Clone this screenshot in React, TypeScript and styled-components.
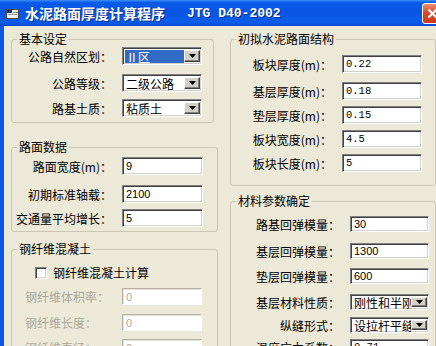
import React from "react"
import styled, { createGlobalStyle } from "styled-components"

const cjk = `"Noto Sans CJK SC", "Noto Sans", sans-serif`

const GlobalStyle = createGlobalStyle`
  html, body {
    margin: 0;
    padding: 0;
    overflow: hidden;
    background: #ece9d8;
  }
  body {
    font-family: ${cjk};
    font-size: 12px;
    color: #000;
  }
`

const Window = styled.div`
  display: flex;
  flex-direction: column;
  height: 346px;
  overflow: hidden;
  width: 448px;
`

const TitleBar = styled.div`
  align-items: center;
  background: linear-gradient(
    to bottom,
    #3d8ff7 0%,
    #0a5ae8 10%,
    #0855e4 45%,
    #0a5de9 85%,
    #0650dc 95%,
    #0842c9 100%
  );
  display: flex;
  flex: 0 0 26px;
  padding-left: 6px;
`

const TitleText = styled.span`
  color: #fff;
  font-family: ${cjk};
  font-size: 14px;
  font-weight: bold;
  margin-left: 6px;
  text-shadow: 1px 1px 0 #0b2d8c;
`

const TitleCode = styled.span`
  color: #fff;
  font-family: "Liberation Mono", monospace;
  font-size: 13px;
  font-weight: bold;
  margin-left: 22px;
  text-shadow: 1px 1px 0 #0b2d8c;
`

const CloseButton = styled.div`
  align-items: center;
  background: linear-gradient(to bottom, #ec8d73 0%, #dc4b2d 45%, #c93a1c 100%);
  border: 1px solid #fff;
  border-radius: 3px;
  display: flex;
  height: 19px;
  justify-content: center;
  margin-left: auto;
  margin-right: 5px;
  width: 19px;
`

const Client = styled.div`
  align-items: flex-start;
  background: #ece9d8;
  border-left: 4px solid #0a56e4;
  display: flex;
  flex: 1 1 auto;
  gap: 12px;
  padding: 6px 0 0 7px;
`

const Column = styled.div`
  display: flex;
  flex: none;
  flex-direction: column;
`

const Group = styled.fieldset<{ $width: number; $top: number; $bottom: number }>`
  border: 1px solid #c9c6b4;
  border-radius: 3px;
  box-sizing: border-box;
  margin: ${({ $top }) => $top}px 0 0;
  min-width: 0;
  padding: 0 0 ${({ $bottom }) => $bottom}px 0;
  width: ${({ $width }) => $width}px;
`

const Legend = styled.legend`
  font-family: ${cjk};
  font-size: 12px;
  line-height: 14px;
  margin-left: 5px;
  padding: 0 2px;
`

const Row = styled.div<{ $top: number; $height: number }>`
  align-items: center;
  display: flex;
  height: ${({ $height }) => $height}px;
  margin-top: ${({ $top }) => $top}px;
`

const Label = styled.label<{ $width: number; $left?: boolean; $disabled?: boolean }>`
  box-sizing: border-box;
  color: ${({ $disabled }) => ($disabled ? "#aca899" : "#000")};
  flex: none;
  font-family: ${cjk};
  font-size: 12px;
  margin-right: 10px;
  padding-left: ${({ $left }) => ($left ? 13 : 0)}px;
  text-align: ${({ $left }) => ($left ? "left" : "right")};
  white-space: nowrap;
  width: ${({ $width }) => $width}px;
`

const sunken = `
  border-style: solid;
  border-width: 1px;
  border-color: #808080 #fff #fff #808080;
  box-shadow: inset 1px 1px 0 #404040, inset -1px -1px 0 #d4d0c8;
`

const TextBox = styled.input<{ $width: number; $mono?: boolean; $disabled?: boolean }>`
  ${sunken}
  background: #fff;
  box-sizing: border-box;
  color: ${({ $disabled }) => ($disabled ? "#aca899" : "#000")};
  flex: none;
  font-family: ${({ $mono }) =>
    $mono ? `"Liberation Mono", monospace` : `"Liberation Sans", Arial, sans-serif`};
  font-size: ${({ $mono }) => ($mono ? 10.5 : 11)}px;
  height: 100%;
  margin: 0;
  outline: none;
  padding: 0 0 0 3px;
  width: ${({ $width }) => $width}px;

  ${({ $disabled }) =>
    $disabled &&
    `
    border-color: #b5b2a4 #fff #fff #b5b2a4;
    box-shadow: inset 1px 1px 0 #e4e1d4;
  `}
`

const Combo = styled.div<{ $width: number }>`
  ${sunken}
  align-items: center;
  background: #fff;
  box-sizing: border-box;
  display: flex;
  flex: none;
  height: 100%;
  padding: 0 1px 0 2px;
  width: ${({ $width }) => $width}px;
`

const ComboText = styled.span<{ $selected?: boolean }>`
  background: ${({ $selected }) =>
    $selected ? "linear-gradient(#316ac5, #316ac5) center / 100% 13px no-repeat" : "none"};
  color: ${({ $selected }) => ($selected ? "#fff" : "#000")};
  flex: 1 1 0;
  font-family: ${cjk};
  font-size: 12px;
  line-height: normal;
  min-width: 0;
  overflow-x: clip;
  padding-left: 1px;
  white-space: nowrap;
`

const ComboButton = styled.span`
  align-items: center;
  align-self: stretch;
  background: #d4d0c8;
  border-color: #fff #404040 #404040 #fff;
  border-style: solid;
  border-width: 1px;
  box-shadow: inset -1px -1px 0 #808080;
  box-sizing: border-box;
  display: flex;
  flex: 0 0 16px;
  justify-content: center;
  margin: 2px 0 2px;
`

const CheckBox = styled.span`
  ${sunken}
  background: #fff;
  box-sizing: border-box;
  flex: none;
  height: 12px;
  margin-left: 23px;
  margin-right: 6px;
  width: 12px;
`

const CheckLabel = styled.span`
  font-family: ${cjk};
  font-size: 12px;
`

const Arrow = () => (
  <svg width="7" height="4" viewBox="0 0 7 4">
    <polygon points="0,0 7,0 3.5,4" fill="#000" />
  </svg>
)

const AppIcon = () => (
  <svg width="13" height="11" viewBox="0 0 13 11">
    <rect x="0.5" y="1.5" width="12" height="9" fill="#f2f2f2" stroke="#4a4a4a" />
    <rect x="1" y="2" width="5" height="3" fill="#1d2f6b" />
    <rect x="7" y="4" width="5" height="1" fill="#8a8a8a" />
    <rect x="2" y="6" width="9" height="1" fill="#9a9a9a" />
  </svg>
)

const CloseIcon = () => (
  <svg width="11" height="11" viewBox="0 0 11 11">
    <path d="M1.5 1.5 L9.5 9.5 M9.5 1.5 L1.5 9.5" stroke="#fff" strokeWidth="2.2" />
  </svg>
)

type Field =
  | { kind: "text"; value: string; mono?: boolean; disabled?: boolean }
  | { kind: "combo"; value: string; selected?: boolean }

type RowSpec = { label: string; top: number; field: Field }

const basicRows: RowSpec[] = [
  { label: "公路自然区划：", top: 1, field: { kind: "combo", value: "Ⅱ区", selected: true } },
  { label: "公路等级：", top: 9, field: { kind: "combo", value: "二级公路" } },
  { label: "路基土质：", top: 7, field: { kind: "combo", value: "粘质土" } },
]

const roadRows: RowSpec[] = [
  { label: "路面宽度(m)：", top: 3, field: { kind: "text", value: "9" } },
  { label: "初期标准轴载：", top: 10, field: { kind: "text", value: "2100" } },
  { label: "交通量平均增长：", top: 6, field: { kind: "text", value: "5" } },
]

const fiberRows: RowSpec[] = [
  { label: "钢纤维体积率：", top: 9, field: { kind: "text", value: "0", disabled: true } },
  { label: "钢纤维长度：", top: 9, field: { kind: "text", value: "0", disabled: true } },
  { label: "钢纤维直径：", top: 8, field: { kind: "text", value: "0", disabled: true } },
]

const structureRows: RowSpec[] = [
  { label: "板块厚度(m)：", top: 9, field: { kind: "text", value: "0.22", mono: true } },
  { label: "基层厚度(m)：", top: 9, field: { kind: "text", value: "0.18", mono: true } },
  { label: "垫层厚度(m)：", top: 6, field: { kind: "text", value: "0.15", mono: true } },
  { label: "板块宽度(m)：", top: 6, field: { kind: "text", value: "4.5", mono: true } },
  { label: "板块长度(m)：", top: 6, field: { kind: "text", value: "5", mono: true } },
]

const materialRows: RowSpec[] = [
  { label: "路基回弹模量：", top: 8, field: { kind: "text", value: "30" } },
  { label: "基层回弹模量：", top: 11, field: { kind: "text", value: "1300" } },
  { label: "垫层回弹模量：", top: 9, field: { kind: "text", value: "600" } },
  { label: "基层材料性质：", top: 10, field: { kind: "combo", value: "刚性和半刚性" } },
  { label: "纵缝形式：", top: 7, field: { kind: "combo", value: "设拉杆平缝" } },
  { label: "温度应力系数：", top: 6, field: { kind: "text", value: "0.71", mono: true } },
]

type FormRowsProps = {
  rows: RowSpec[]
  height: number
  labelWidth: number
  fieldWidth: number
  leftLabels?: boolean
}

const FormRows = ({ rows, height, labelWidth, fieldWidth, leftLabels }: FormRowsProps) => (
  <>
    {rows.map(({ label, top, field }) => {
      const disabled = field.kind === "text" && field.disabled
      return (
        <Row key={label} $top={top} $height={height}>
          <Label $width={labelWidth} $left={leftLabels} $disabled={disabled}>
            {label}
          </Label>
          {field.kind === "text" ? (
            <TextBox
              readOnly
              value={field.value}
              $width={fieldWidth}
              $mono={field.mono}
              $disabled={field.disabled}
            />
          ) : (
            <Combo $width={fieldWidth}>
              <ComboText $selected={field.selected}>{field.value}</ComboText>
              <ComboButton>
                <Arrow />
              </ComboButton>
            </Combo>
          )}
        </Row>
      )
    })}
  </>
)

const App = () => (
  <>
    <GlobalStyle />
    <Window>
      <TitleBar>
        <AppIcon />
        <TitleText>水泥路面厚度计算程序</TitleText>
        <TitleCode>JTG D40-2002</TitleCode>
        <CloseButton>
          <CloseIcon />
        </CloseButton>
      </TitleBar>
      <Client>
        <Column>
          <Group $width={203} $top={0} $bottom={5}>
            <Legend>基本设定</Legend>
            <FormRows rows={basicRows} height={18} labelWidth={100} fieldWidth={80} />
          </Group>
          <Group $width={207} $top={17} $bottom={4}>
            <Legend>路面数据</Legend>
            <FormRows rows={roadRows} height={18} labelWidth={100} fieldWidth={81} />
          </Group>
          <Group $width={207} $top={10} $bottom={8}>
            <Legend>钢纤维混凝土</Legend>
            <Row $top={10} $height={13}>
              <CheckBox />
              <CheckLabel>钢纤维混凝土计算</CheckLabel>
            </Row>
            <FormRows
              rows={fiberRows}
              height={17}
              labelWidth={100}
              fieldWidth={80}
              leftLabels
            />
          </Group>
        </Column>
        <Column>
          <Group $width={206} $top={0} $bottom={13}>
            <Legend>初拟水泥路面结构</Legend>
            <FormRows rows={structureRows} height={18} labelWidth={101} fieldWidth={80} />
          </Group>
          <Group $width={206} $top={8} $bottom={8}>
            <Legend>材料参数确定</Legend>
            <FormRows rows={materialRows} height={16} labelWidth={109} fieldWidth={79} />
          </Group>
        </Column>
      </Client>
    </Window>
  </>
)

export default App
